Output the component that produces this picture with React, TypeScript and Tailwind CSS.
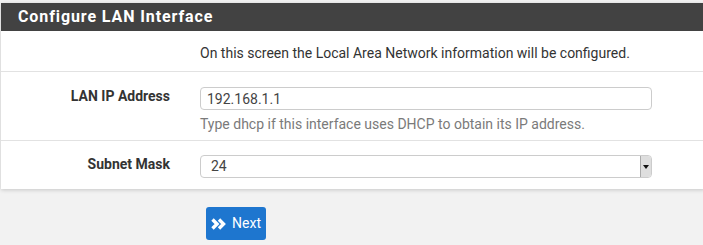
import React from "react";

function DoubleChevron() {
  return (
    <svg width="15" height="12" viewBox="0 0 15 12" className="mr-[6px]">
      <path d="M1.5 1.5 L6 6 L1.5 10.5" stroke="white" strokeWidth="3.4" fill="none" strokeLinejoin="miter" />
      <path d="M8 1.5 L12.5 6 L8 10.5" stroke="white" strokeWidth="3.4" fill="none" strokeLinejoin="miter" />
    </svg>
  );
}

export default function App() {
  return (
    <div
      className="w-[703px] h-[245px] bg-[#f2f2f2] pt-[3px] overflow-hidden text-[14px] text-[#333]"
      style={{ fontFamily: "Roboto, 'Liberation Sans', sans-serif" }}
    >
      <div className="ml-[1px] w-[704px] bg-white shadow-[0_1px_4px_rgba(0,0,0,0.18)]">
        {/* header */}
        <div className="h-[28px] bg-[#424242] flex items-center pl-[17px]">
          <h2 className="text-white font-bold text-[16px] tracking-[0.9px] leading-none">
            Configure LAN Interface
          </h2>
        </div>

        {/* intro */}
        <div className="flex border-b border-[#e2e2e2] pt-[12px] pb-[8px]">
          <div className="w-[199px]" />
          <p className="leading-[20px]">
            On this screen the Local Area Network information will be configured.
          </p>
        </div>

        {/* LAN IP */}
        <div className="flex border-b border-[#e2e2e2] pt-[15px] pb-[6px]">
          <label className="w-[169px] text-right font-bold leading-[17px] pt-[1px]">
            LAN IP Address
          </label>
          <div className="ml-[30px] w-[452px]">
            <input
              defaultValue="192.168.1.1"
              className="w-full h-[23px] border border-[#ccc] rounded-[4px] px-[6px] text-[14px] text-[#444] outline-none"
              style={{ fontFamily: "Roboto, 'Liberation Sans', sans-serif" }}
            />
            <p className="mt-[4px] leading-[20px] text-[#7a7a7a]">
              Type dhcp if this interface uses DHCP to obtain its IP address.
            </p>
          </div>
        </div>

        {/* subnet */}
        <div className="flex pt-[14px] pb-[11px]">
          <label className="w-[169px] text-right font-bold leading-[17px] pt-[1px]">
            Subnet Mask
          </label>
          <div className="ml-[30px] w-[452px] h-[23px] border border-[#ccc] rounded-[4px] flex items-center">
            <span className="flex-1 pl-[10px] text-[#444]">24</span>
            <span className="w-[11px] h-[21px] bg-[#dedede] border-l border-[#aaa] rounded-r-[3px] flex items-center justify-center">
              <svg width="6" height="4" viewBox="0 0 6 4">
                <path d="M0 0 L6 0 L3 4 Z" fill="#111" />
              </svg>
            </span>
          </div>
        </div>
      </div>

      <div className="pl-[206px] pt-[18px]">
        <button className="h-[33px] w-[60px] bg-[#1e76cf] rounded-[3px] text-white text-[14px] flex items-center justify-center">
          <DoubleChevron />
          Next
        </button>
      </div>
    </div>
  );
}
